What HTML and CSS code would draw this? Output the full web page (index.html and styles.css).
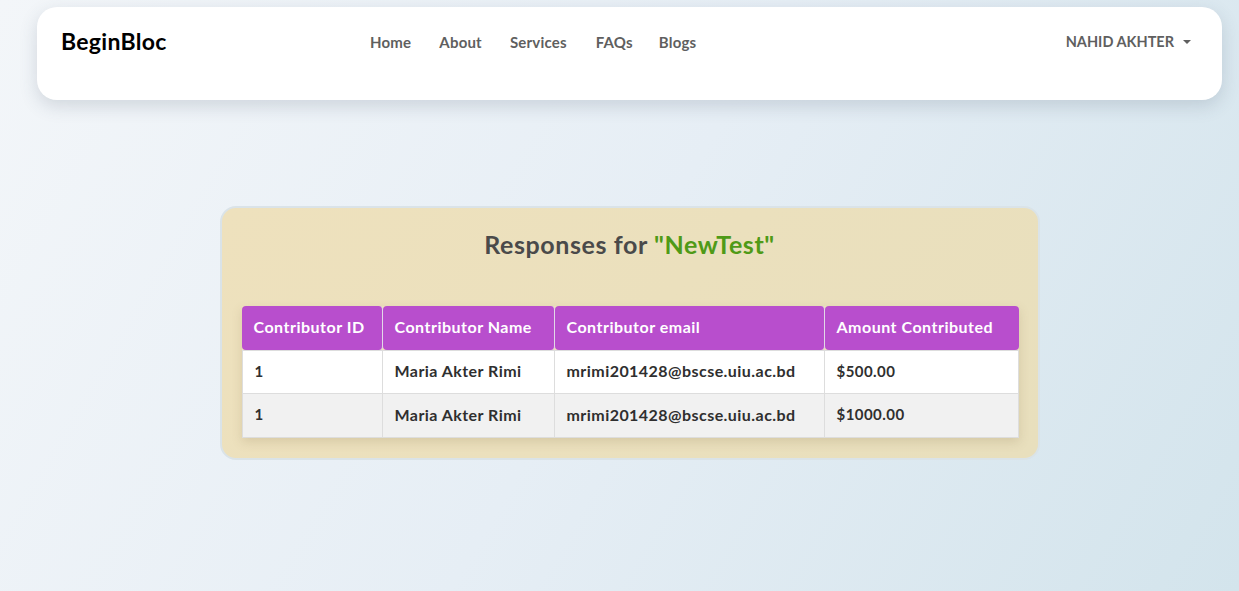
FILE: index.html
```html
<!DOCTYPE html>
<html lang="en">
<head>
<meta charset="utf-8">
<title>BeginBloc - Responses</title>
<link rel="stylesheet" href="styles.css">
</head>
<body>
<header class="navbar">
  <a class="brand" href="#">BeginBloc</a>
  <nav class="nav-links">
    <a href="#">Home</a>
    <a href="#">About</a>
    <a href="#">Services</a>
    <a href="#">FAQs</a>
    <a href="#">Blogs</a>
  </nav>
  <div class="user">NAHID AKHTER <span class="caret"></span></div>
</header>

<main class="main">
  <section class="card">
    <h2 class="title">Responses for <span class="accent">"NewTest"</span></h2>
    <table class="responses">
      <thead>
        <tr>
          <th class="c1">Contributor ID</th>
          <th class="c2">Contributor Name</th>
          <th class="c3">Contributor email</th>
          <th class="c4">Amount Contributed</th>
        </tr>
      </thead>
      <tbody>
        <tr>
          <td class="num">1</td>
          <td>Maria Akter Rimi</td>
          <td>mrimi201428@bscse.uiu.ac.bd</td>
          <td class="num">$500.00</td>
        </tr>
        <tr>
          <td class="num">1</td>
          <td>Maria Akter Rimi</td>
          <td>mrimi201428@bscse.uiu.ac.bd</td>
          <td class="num">$1000.00</td>
        </tr>
      </tbody>
    </table>
  </section>
</main>
</body>
</html>
```

FILE: styles.css
```css
* { box-sizing: border-box; }

html, body {
  margin: 0;
  height: 100%;
}

body {
  font-family: Lato, "Open Sans", sans-serif;
  background: linear-gradient(120deg, #f3f6f9 0%, #e6eef5 50%, #d3e4ec 100%);
  min-height: 591px;
  padding: 7px 17px 0 37px;
}

.navbar {
  height: 93px;
  background: #ffffff;
  border-radius: 20px;
  box-shadow: 0 6px 18px rgba(60, 80, 100, 0.18);
  display: flex;
  align-items: flex-start;
  padding: 19px 31px 0 24px;
}

.brand {
  font-size: 23px;
  font-weight: 700;
  letter-spacing: 0.3px;
  color: #000;
  text-decoration: none;
  line-height: 30px;
  width: 295px;
}

.nav-links {
  display: flex;
  padding-top: 5px;
  flex: 1;
}

.nav-links a {
  font-size: 15px;
  font-weight: 700;
  letter-spacing: 0.2px;
  color: #5f5f5f;
  text-decoration: none;
  padding: 0 14px;
  line-height: 22px;
}

.nav-links a:nth-child(3) { padding-right: 15px; }
.nav-links a:nth-child(4) { padding-right: 12px; }

.user {
  font-size: 14.5px;
  font-weight: 700;
  color: #5f5f5f;
  padding-top: 5px;
  line-height: 22px;
  display: flex;
  align-items: center;
}

.caret {
  display: inline-block;
  margin-left: 9px;
  width: 0;
  height: 0;
  border-left: 4px solid transparent;
  border-right: 4px solid transparent;
  border-top: 4px solid #5f5f5f;
}

.main {
  display: flex;
  justify-content: center;
  padding-top: 106px;
}

.card {
  width: 820px;
  background: linear-gradient(135deg, #eee1bd 0%, #e8dfbd 100%);
  border: 2px solid #dae3e8;
  border-radius: 16px;
  padding: 19px 20px 20px 20px;
}

.title {
  margin: 0 0 45px;
  text-align: center;
  font-size: 25px;
  letter-spacing: 0.6px;
  font-weight: 700;
  color: #4a4a4a;
  line-height: 34px;
}

.accent { color: #4f9a17; }

.responses {
  width: 777px;
  border-collapse: separate;
  border-spacing: 0;
  box-shadow: 0 4px 10px rgba(120, 100, 60, 0.18);
  font-size: 16px;
}

.responses th {
  background: #b84ecd;
  color: #ffffff;
  text-align: left;
  font-weight: 700;
  letter-spacing: 0.5px;
  height: 44px;
  padding: 0 12px 3px;
  border-radius: 4px;
  border-right: 1px solid #e2d8e8;
}

.responses th:last-child { border-right: none; }

.c1 { width: 141px; }
.c2 { width: 172px; }
.c3 { width: 270px; }
.c4 { width: 194px; }

.responses td {
  height: 44px;
  padding: 0 12px 3px;
  color: #2f2f2f;
  font-weight: 700;
  letter-spacing: 0.45px;
  background: #ffffff;
  border-right: 1px solid #dddddd;
  border-bottom: 1px solid #dddddd;
}

.responses td:first-child { border-left: 1px solid #dddddd; }

.responses tbody tr:first-child td { border-top: 1px solid #dddddd; }

.responses tbody tr:nth-child(2) td { background: #f1f1f1; }

.responses td.num { font-size: 15px; }
```
